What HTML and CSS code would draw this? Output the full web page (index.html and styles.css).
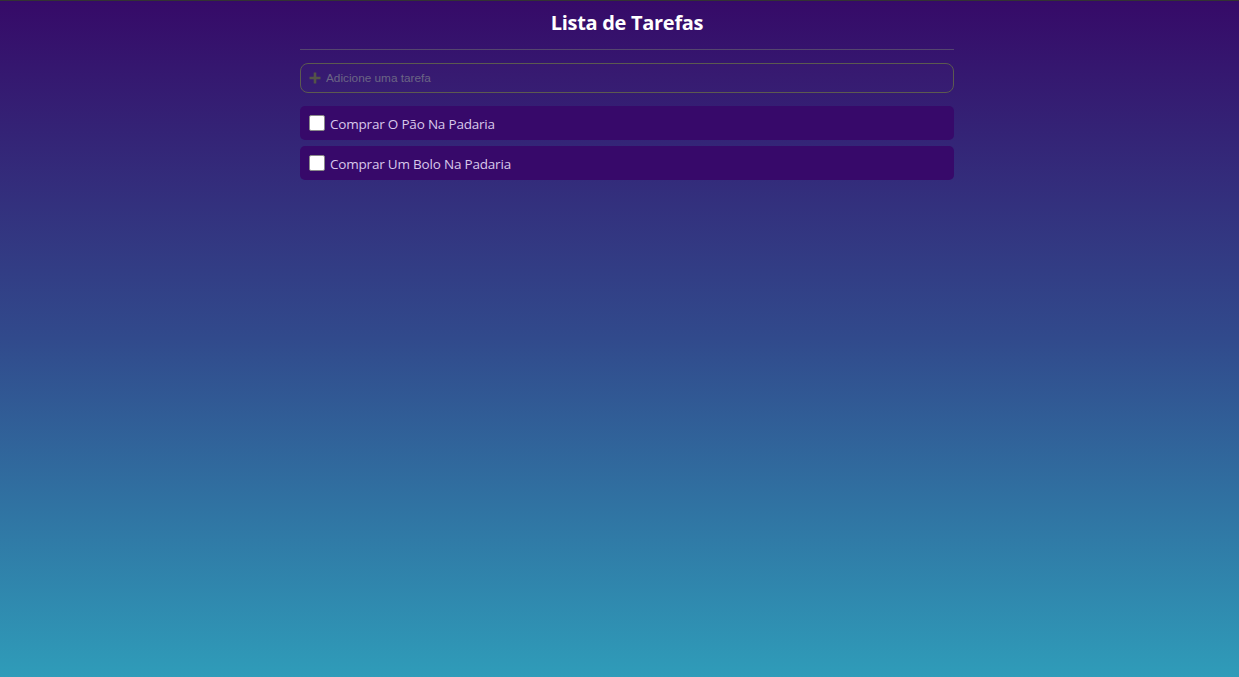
FILE: index.html
```html
<!DOCTYPE html>
<html lang="pt">
<head>
<meta charset="utf-8">
<title>Lista de Tarefas</title>
<link rel="stylesheet" href="styles.css">
</head>
<body>
<main class="app">
  <h1 class="title">Lista de Tarefas</h1>
  <hr class="divider">
  <label class="add">
    <svg class="add-icon" viewBox="0 0 12 12" width="12" height="12"><path d="M6 0.5v11M0.5 6h11" stroke="#545448" stroke-width="2.6"/></svg>
    <input class="add-input" type="text" placeholder="Adicione uma tarefa">
  </label>
  <ul class="tasks">
    <li class="task"><span class="check"></span><span class="task-text">Comprar O Pão Na Padaria</span></li>
    <li class="task"><span class="check"></span><span class="task-text">Comprar Um Bolo Na Padaria</span></li>
  </ul>
</main>
</body>
</html>
```
FILE: styles.css
```css
html, body {
  margin: 0;
  padding: 0;
  height: 100%;
}
body {
  border-top: 1px solid #333333;
  box-sizing: border-box;
  padding-left: 15px;
  background: linear-gradient(180deg, #360a68 0%, #314a8c 50%, #2f9cb9 100%);
  font-family: "Open Sans", "Noto Sans", sans-serif;
}
.app {
  width: 654px;
  margin: 0 auto;
  display: flex;
  flex-direction: column;
}
.title {
  margin: 8px 0 0;
  text-align: center;
  color: #ffffff;
  font-size: 20px;
  font-weight: 700;
  line-height: 27px;
  letter-spacing: -0.3px;
}
.divider {
  margin: 13px 0 0;
  border: 0;
  border-top: 1px solid #54466e;
  height: 0;
}
.add {
  margin-top: 13px;
  height: 30px;
  box-sizing: border-box;
  border: 1px solid #5c5a50;
  border-radius: 8px;
  display: flex;
  align-items: center;
  padding: 0 8px;
  gap: 5px;
  background: rgba(255,255,255,0.01);
}
.add-icon {
  flex: none;
}
.add-input {
  flex: 1;
  border: 0;
  outline: none;
  background: transparent;
  font-family: "Liberation Sans", Arial, sans-serif;
  font-size: 11.8px;
  color: #ccc;
  padding: 0;
}
.add-input::placeholder {
  color: #6b6585;
}
.tasks {
  list-style: none;
  margin: 13px 0 0;
  padding: 0;
  display: flex;
  flex-direction: column;
  gap: 6px;
}
.task {
  height: 34px;
  background: #37096a;
  border-radius: 5px;
  display: flex;
  align-items: center;
  padding: 0 9px;
  gap: 5px;
}
.check {
  width: 16px;
  height: 16px;
  box-sizing: border-box;
  background: #ffffff;
  border: 1px solid #8a8a8a;
  border-radius: 2px;
  flex: none;
}
.task-text {
  color: #d9c8ea;
  font-size: 13.5px;
  letter-spacing: -0.2px;
  padding-top: 2px;
}
```
